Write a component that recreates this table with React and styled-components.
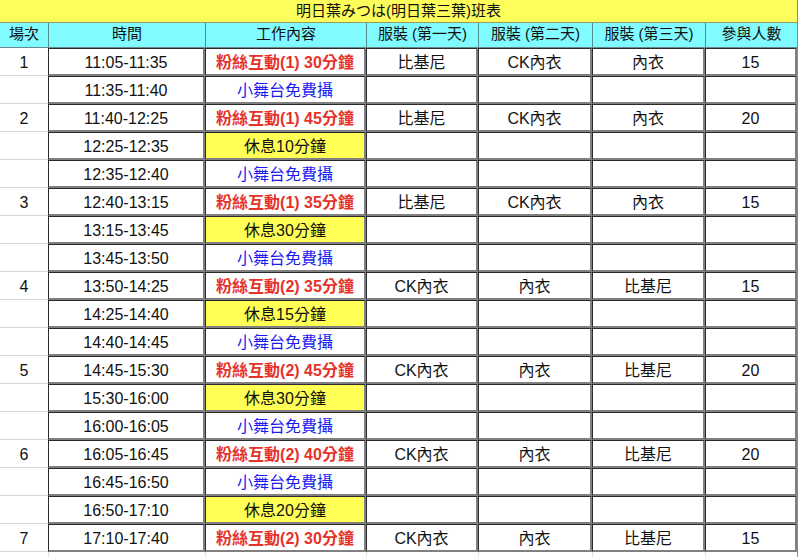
import React from "react";
import styled, { createGlobalStyle } from "styled-components";

const Global = createGlobalStyle`
  html, body { margin: 0; padding: 0; background: #fff; }
  body { font-family: "Liberation Sans", "Noto Sans CJK TC", sans-serif; color: #111; }
`;

const COLS = "48px 157px 161px 112px 114px 113px 92px";

const Sheet = styled.div`
  width: 797px;
  border-right: 1px solid #8a8a8a;
`;

const Title = styled.div`
  height: 22px;
  background: #fdfd5c;
  border-bottom: 1px solid #9a9a6a;
  display: flex;
  align-items: center;
  justify-content: center;
  font-size: 15px;
  line-height: 18px;
`;

const HeaderRow = styled.div`
  display: grid;
  grid-template-columns: ${COLS};
  height: 25px;
  background: #80fbff;
  border-bottom: 1px solid #6a8a8a;
  box-sizing: border-box;
`;

const HeaderCell = styled.div`
  display: flex;
  align-items: center;
  justify-content: center;
  font-size: 15px;
  line-height: 18px;
  padding-bottom: 2px;
  border-left: ${(p) => (p.$first ? "none" : "1px solid #4d8f93")};
  white-space: nowrap;
`;

const Row = styled.div`
  display: grid;
  grid-template-columns: ${COLS};
  height: ${(p) => (p.$tail ? "5px" : "28px")};
`;

const IndexCell = styled.div`
  display: flex;
  align-items: center;
  justify-content: center;
  font-size: 16px;
  line-height: 18px;
  padding-top: 3px;
  border-bottom: 1px solid #d6d6d6;
  box-sizing: border-box;
`;

const Box = styled.div`
  display: flex;
  align-items: center;
  justify-content: center;
  box-sizing: border-box;
  font-size: 16px;
  line-height: 18px;
  white-space: nowrap;
  border-top: 1px solid #2a2a2a;
  border-left: 1px solid #2a2a2a;
  border-right: 2px solid #808080;
  border-bottom: 2px solid #808080;
  background: ${(p) => (p.$kind === "rest" ? "#ffff55" : "#fff")};
  color: ${(p) =>
    p.$kind === "fan" ? "#e6332a" : p.$kind === "stage" ? "#1c1cf0" : "#111"};
  font-weight: ${(p) => (p.$kind === "fan" ? 700 : 400)};
  padding-top: 2px;
`;

const TailCell = styled.div`
  border-left: ${(p) => (p.$first ? "none" : "1px solid #e0e0e0")};
`;

const rows = [
  ["1", "11:05-11:35", "fan", "粉絲互動(1) 30分鐘", "比基尼", "CK內衣", "內衣", "15"],
  ["", "11:35-11:40", "stage", "小舞台免費攝", "", "", "", ""],
  ["2", "11:40-12:25", "fan", "粉絲互動(1) 45分鐘", "比基尼", "CK內衣", "內衣", "20"],
  ["", "12:25-12:35", "rest", "休息10分鐘", "", "", "", ""],
  ["", "12:35-12:40", "stage", "小舞台免費攝", "", "", "", ""],
  ["3", "12:40-13:15", "fan", "粉絲互動(1) 35分鐘", "比基尼", "CK內衣", "內衣", "15"],
  ["", "13:15-13:45", "rest", "休息30分鐘", "", "", "", ""],
  ["", "13:45-13:50", "stage", "小舞台免費攝", "", "", "", ""],
  ["4", "13:50-14:25", "fan", "粉絲互動(2) 35分鐘", "CK內衣", "內衣", "比基尼", "15"],
  ["", "14:25-14:40", "rest", "休息15分鐘", "", "", "", ""],
  ["", "14:40-14:45", "stage", "小舞台免費攝", "", "", "", ""],
  ["5", "14:45-15:30", "fan", "粉絲互動(2) 45分鐘", "CK內衣", "內衣", "比基尼", "20"],
  ["", "15:30-16:00", "rest", "休息30分鐘", "", "", "", ""],
  ["", "16:00-16:05", "stage", "小舞台免費攝", "", "", "", ""],
  ["6", "16:05-16:45", "fan", "粉絲互動(2) 40分鐘", "CK內衣", "內衣", "比基尼", "20"],
  ["", "16:45-16:50", "stage", "小舞台免費攝", "", "", "", ""],
  ["", "16:50-17:10", "rest", "休息20分鐘", "", "", "", ""],
  ["7", "17:10-17:40", "fan", "粉絲互動(2) 30分鐘", "CK內衣", "內衣", "比基尼", "15"],
];

const headers = ["場次", "時間", "工作內容", "服裝 (第一天)", "服裝 (第二天)", "服裝 (第三天)", "參與人數"];

export default function App() {
  return (
    <>
      <Global />
      <Sheet>
        <Title>明日葉みつは(明日葉三葉)班表</Title>
        <HeaderRow>
          {headers.map((h, i) => (
            <HeaderCell key={h} $first={i === 0}>{h}</HeaderCell>
          ))}
        </HeaderRow>
        {rows.map((r, i) => (
          <Row key={i}>
            <IndexCell>{r[0]}</IndexCell>
            <Box>{r[1]}</Box>
            <Box $kind={r[2]}>{r[3]}</Box>
            <Box>{r[4]}</Box>
            <Box>{r[5]}</Box>
            <Box>{r[6]}</Box>
            <Box>{r[7]}</Box>
          </Row>
        ))}
        <Row $tail>
          {headers.map((h, i) => (
            <TailCell key={h} $first={i === 0} />
          ))}
        </Row>
      </Sheet>
    </>
  );
}
